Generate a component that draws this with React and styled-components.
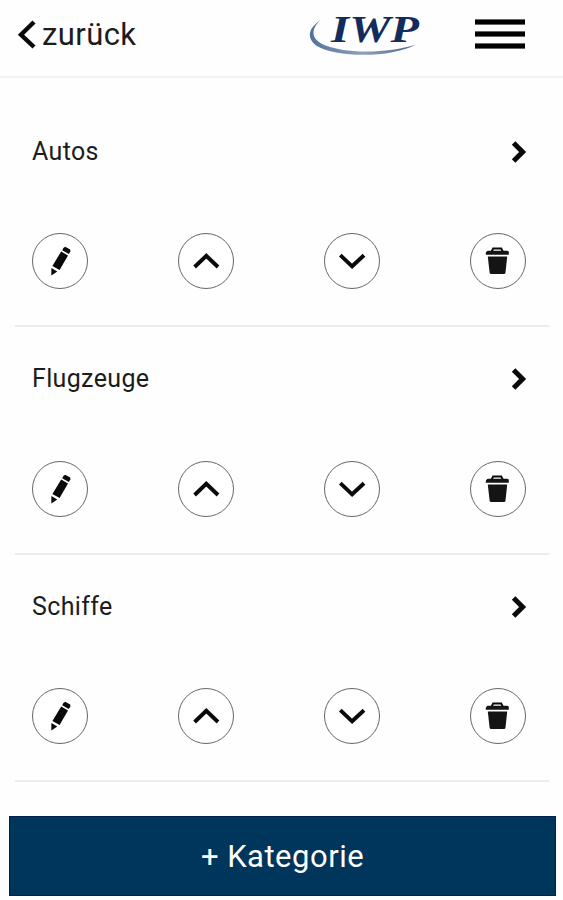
import React from 'react';
import styled, { createGlobalStyle } from 'styled-components';

const GlobalStyle = createGlobalStyle`
  * {
    box-sizing: border-box;
  }
  body {
    margin: 0;
    background: #fefefe;
    font-family: Roboto, 'Liberation Sans', sans-serif;
    color: #1c1c1c;
  }
`;

const Page = styled.div`
  display: flex;
  flex-direction: column;
  height: 900px;
  overflow: hidden;
`;

const Header = styled.header`
  display: flex;
  align-items: center;
  height: 78px;
  padding: 0 38px 8px 18px;
  border-bottom: 2px solid #f3f3f3;
`;

const Back = styled.button`
  display: flex;
  align-items: center;
  gap: 6px;
  border: none;
  padding: 2px 0 0;
  background: transparent;
  color: #1c1c1c;
  font-family: inherit;
  font-size: 31px;
  line-height: 36px;
  letter-spacing: 0.4px;
  cursor: pointer;
`;

const Icon = styled.svg`
  display: block;
  flex: none;
  fill: none;
  stroke: #0a0a0a;
  overflow: visible;
`;

const Logo = styled(Icon)`
  margin-left: auto;
  stroke: none;
`;

const LogoText = styled.text`
  font-family: 'Liberation Serif', serif;
  font-size: 38px;
  font-weight: 700;
  font-style: italic;
  fill: #122c5c;
`;

const Menu = styled.button`
  display: flex;
  flex-direction: column;
  gap: 6px;
  width: 50px;
  margin-left: 53px;
  border: none;
  padding: 0;
  background: transparent;
  cursor: pointer;
`;

const Bar = styled.span`
  height: 6px;
  background: #000;
  border: 1px solid #666;
  border-width: 1px 0;
`;

const List = styled.main`
  padding: 21.5px 14px 0 15px;
`;

const Row = styled.section`
  display: flex;
  flex-direction: column;
  height: 227.5px;
  padding: 33px 23px 0 17px;
  border-bottom: 2px solid #ececec;
`;

const RowTitle = styled.div`
  display: flex;
  align-items: center;
  justify-content: space-between;
  height: 38px;
  font-size: 25px;
  line-height: 38px;
  letter-spacing: 0.35px;
`;

const Actions = styled.div`
  display: flex;
  justify-content: space-between;
  width: 494px;
  margin-top: 62.5px;
`;

const Circle = styled.button`
  display: flex;
  align-items: center;
  justify-content: center;
  width: 56px;
  height: 56px;
  border: 1.5px solid #666;
  border-radius: 50%;
  padding: 0;
  background: #fff;
  cursor: pointer;
`;

const AddButton = styled.button`
  height: 80px;
  margin: 34px 7px 0 9px;
  border: 1px solid #02204a;
  background: #00355c;
  color: #fff;
  font-family: inherit;
  font-size: 31px;
  letter-spacing: 0.5px;
  cursor: pointer;
`;

const BackIcon = () => (
  <Icon width="18" height="28" viewBox="0 0 18 28" strokeWidth="4.4">
    <path d="M16 1 3 13.8 16 26" />
  </Icon>
);

const NextIcon = () => (
  <Icon width="14" height="22" viewBox="0 0 14 22" strokeWidth="5">
    <path d="M1.6 2 10.6 11 1.6 20" />
  </Icon>
);

const PencilIcon = () => (
  <Icon width="54" height="54" viewBox="0 0 54 54">
    <g fill="#0a0a0a" stroke="none">
      <path d="M30.4 14 32.2 12.8 37.2 15.6 37.4 17.4 35.8 20.1 29.2 16.2Z" />
      <path d="M28.2 17.4 35 21.6 26.6 36 19.4 31.9Z" />
      <path d="M18.4 34 24.3 37.5 18.3 41.4Z" />
    </g>
  </Icon>
);

const UpIcon = () => (
  <Icon width="26" height="16" viewBox="0 0 26 16" strokeWidth="3.9">
    <path d="M1.6 14 13.3 2.8 25 14" />
  </Icon>
);

const DownIcon = () => (
  <Icon width="26" height="16" viewBox="0 0 26 16" strokeWidth="3.9">
    <path d="M1.3 2.2 13.1 13.3 25 2.2" />
  </Icon>
);

const TrashIcon = () => (
  <Icon width="54" height="54" viewBox="0 0 54 54">
    <path d="M20.7 17.5 22.2 14.4H30.2L31.7 17.5" strokeWidth="2" />
    <g fill="#141414" stroke="none">
      <path d="M15.7 17.5Q15.7 16.8 17.2 16.8H35.7Q37.8 16.8 37.8 18V20.8H14.8V18.8Z" />
      <path d="M16.8 22.4H36.2L34.5 38.4Q34.3 39.9 32.9 39.9H20.2Q18.8 39.9 18.6 38.4Z" />
    </g>
  </Icon>
);

const LogoMark = () => (
  <Logo width="113" height="44" viewBox="0 0 113 44" role="img" aria-label="IWP">
    <defs>
      <linearGradient id="swoosh">
        <stop offset="0" stopColor="#52719b" />
        <stop offset="0.5" stopColor="#8fa2bb" />
        <stop offset="1" stopColor="#48658f" />
      </linearGradient>
    </defs>
    <path
      fill="url(#swoosh)"
      d="M11.5 8C-2 17 -2 27 8 34C26 45.5 82 46.5 107 32.5C78 42 34 42 13 32C2 26 2 17 11.5 8Z"
    />
    <LogoText x="22" y="30" textLength="88" lengthAdjust="spacingAndGlyphs">
      IWP
    </LogoText>
  </Logo>
);

const categories = ['Autos', 'Flugzeuge', 'Schiffe'];

const Category = ({ name }) => (
  <Row>
    <RowTitle>
      {name}
      <NextIcon />
    </RowTitle>
    <Actions>
      <Circle type="button" aria-label="Bearbeiten">
        <PencilIcon />
      </Circle>
      <Circle type="button" aria-label="Nach oben">
        <UpIcon />
      </Circle>
      <Circle type="button" aria-label="Nach unten">
        <DownIcon />
      </Circle>
      <Circle type="button" aria-label="Entfernen">
        <TrashIcon />
      </Circle>
    </Actions>
  </Row>
);

function App() {
  return (
    <Page>
      <GlobalStyle />
      <Header>
        <Back type="button">
          <BackIcon />
          zurück
        </Back>
        <LogoMark />
        <Menu type="button" aria-label="Menü">
          <Bar />
          <Bar />
          <Bar />
        </Menu>
      </Header>
      <List>
        {categories.map((name) => (
          <Category key={name} name={name} />
        ))}
      </List>
      <AddButton type="button">+ Kategorie</AddButton>
    </Page>
  );
}

export default App;
